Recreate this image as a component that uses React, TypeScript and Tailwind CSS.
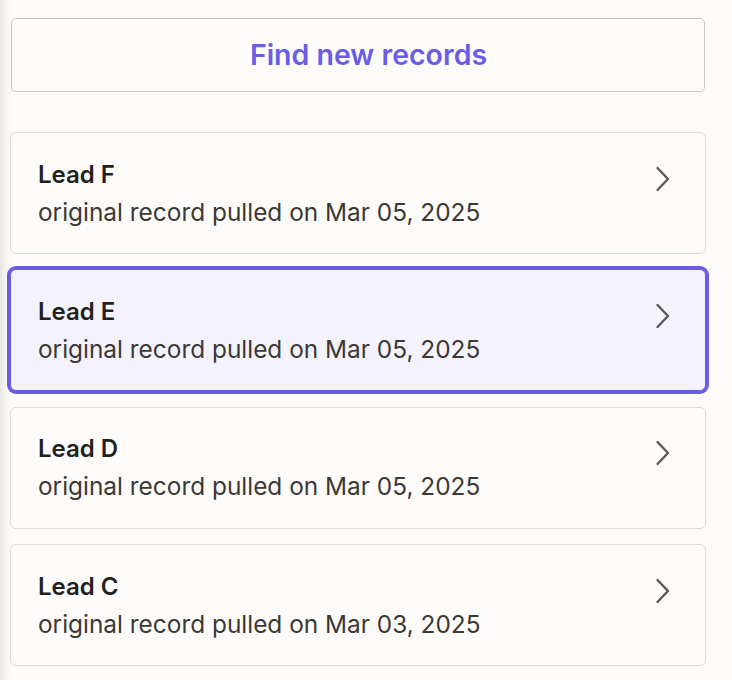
type Lead = { name: string; date: string; selected?: boolean };

const leads: Lead[] = [
    { name: "Lead F", date: "Mar 05, 2025" },
    { name: "Lead E", date: "Mar 05, 2025", selected: true },
    { name: "Lead D", date: "Mar 05, 2025" },
    { name: "Lead C", date: "Mar 03, 2025" },
];

const Chevron = () => (
    <svg width="16" height="26" viewBox="0 0 16 26" fill="none" className="mt-[6px] shrink-0">
        <path d="M2.5 2 L13 13 L2.5 24" stroke="#5a5754" strokeWidth="2.4" strokeLinecap="round" strokeLinejoin="round" />
    </svg>
);

const LeadCard = ({ lead }: { lead: Lead }) => (
    <button
        type="button"
        className={
            lead.selected
                ? "flex h-[122px] w-full shrink-0 items-center justify-between rounded-[6px] border border-[#6b5ce7] bg-[#f4f3fd] pl-[27px] pr-[34px] text-left ring-[3px] ring-[#6b5ce7]"
                : "flex h-[122px] w-full shrink-0 items-center justify-between rounded-[6px] border border-[#dcdad5] bg-[#fdfcfa] pl-[27px] pr-[34px] text-left"
        }
    >
        <div className="flex w-full items-start justify-between">
            <div className="flex flex-col gap-[7px]">
                <span className="text-[24px] font-semibold leading-[30px] text-[#231f1c]">{lead.name}</span>
                <span className="text-[24.4px] leading-[30px] text-[#3c3935]">original record pulled on {lead.date}</span>
            </div>
            <Chevron />
        </div>
    </button>
);

export default function App() {
    return (
        <div className="h-[680px] overflow-hidden bg-[linear-gradient(to_right,#e6e5e1_0px,#f6f5f2_6px,#fdfcfa_14px)] font-['Inter',sans-serif]">
            <div className="flex flex-col pl-[10px] pr-[26px] pt-[18px]">
                <button
                    type="button"
                    className="mx-px flex h-[74px] shrink-0 items-center justify-center rounded-[5px] border border-[#c9c7c2] bg-[#fdfcfa] pl-[21px] text-[28.5px] font-semibold text-[#6b5ce7]"
                >
                    Find new records
                </button>
                <div className="mt-[40px] flex flex-col gap-[15.4px]">
                    {leads.map((lead) => (
                        <LeadCard key={lead.name} lead={lead} />
                    ))}
                    {/* next card, only its top edge shows */}
                    <div className="h-[122px] w-full shrink-0 rounded-[6px] border border-[#dcdad5] bg-[#fdfcfa]" />
                </div>
            </div>
        </div>
    );
}
